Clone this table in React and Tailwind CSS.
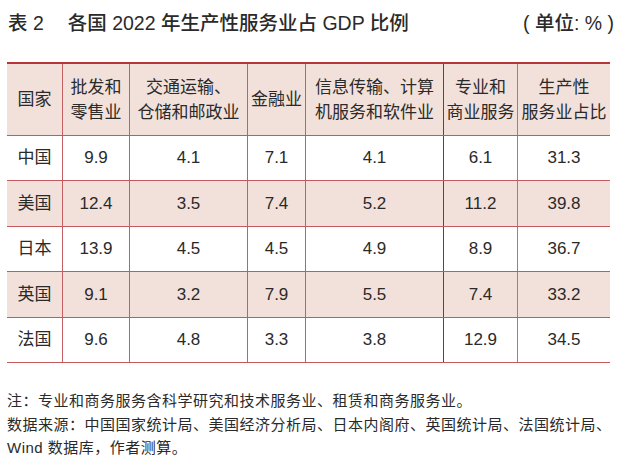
import React from 'react';

const cols = [
  { w: 'w-[55px]', head: ['国家'] },
  { w: 'w-[67px]', head: ['批发和', '零售业'] },
  { w: 'w-[118px]', head: ['交通运输、', '仓储和邮政业'] },
  { w: 'w-[58px]', head: ['金融业'] },
  { w: 'w-[138px]', head: ['信息传输、计算', '机服务和软件业'] },
  { w: 'w-[74px]', head: ['专业和', '商业服务'] },
  { w: 'w-[93px]', head: ['生产性', '服务业占比'] },
];

const rows = [
  { name: '中国', vals: ['9.9', '4.1', '7.1', '4.1', '6.1', '31.3'], shade: false, h: 'h-[45px]' },
  { name: '美国', vals: ['12.4', '3.5', '7.4', '5.2', '11.2', '39.8'], shade: true, h: 'h-[46px]' },
  { name: '日本', vals: ['13.9', '4.5', '4.5', '4.9', '8.9', '36.7'], shade: false, h: 'h-[45px]' },
  { name: '英国', vals: ['9.1', '3.2', '7.9', '5.5', '7.4', '33.2'], shade: true, h: 'h-[46px]' },
  { name: '法国', vals: ['9.6', '4.8', '3.3', '3.8', '12.9', '34.5'], shade: false, h: 'h-[45px]' },
];

// vertical rule before each column; the one before 专业和 is darker
const leftRule = [
  '',
  'border-l border-[#c45f63]',
  'border-l border-[#c45f63]',
  'border-l border-[#c45f63]',
  'border-l border-[#c45f63]',
  'border-l border-[#a2262b]',
  'border-l border-[#c86e70]',
];

export default function App() {
  return (
    <div
      className="w-[623px] h-[466px] bg-white px-[7px] pt-[11px] text-[#2a2a2a]"
      style={{ fontFamily: '"Liberation Sans", "Noto Sans CJK SC", sans-serif' }}
    >
      {/* title */}
      <div className="flex items-center justify-between h-[24px] text-[19.5px] font-medium leading-[24px] pl-[1px] pr-[2px]">
        <div className="flex">
          <span>表 2</span>
          <span className="ml-[24px]">各国 2022 年生产性服务业占 GDP 比例</span>
        </div>
        <span>( 单位: % )</span>
      </div>

      {/* table */}
      <div className="mt-[27px] w-[603px] text-[17px]">
        <div className="flex h-[74px] border-t-2 border-b border-t-[#b8343b] border-b-[#c45a5e] bg-[#f2e1da]">
          {cols.map((c, i) => (
            <div
              key={i}
              className={`${c.w} ${leftRule[i]} flex flex-col items-center justify-center leading-[25px] whitespace-nowrap`}
            >
              {c.head.map((t, j) => (
                <span key={j}>{t}</span>
              ))}
            </div>
          ))}
        </div>
        {rows.map((r, ri) => (
          <div
            key={ri}
            className={`flex ${r.h} border-b border-[#c45a5e] ${r.shade ? 'bg-[#f2e1da]' : 'bg-white'}`}
          >
            {[r.name, ...r.vals].map((v, i) => (
              <div
                key={i}
                className={`${cols[i].w} ${leftRule[i]} flex items-center justify-center`}
              >
                {v}
              </div>
            ))}
          </div>
        ))}
      </div>

      {/* notes */}
      <div className="mt-[26px] text-[15px] leading-[23.5px] tracking-[0.5px]">
        <p>注：专业和商务服务含科学研究和技术服务业、租赁和商务服务业。</p>
        <p>数据来源：中国国家统计局、美国经济分析局、日本内阁府、英国统计局、法国统计局、</p>
        <p>Wind 数据库，作者测算。</p>
      </div>
    </div>
  );
}
